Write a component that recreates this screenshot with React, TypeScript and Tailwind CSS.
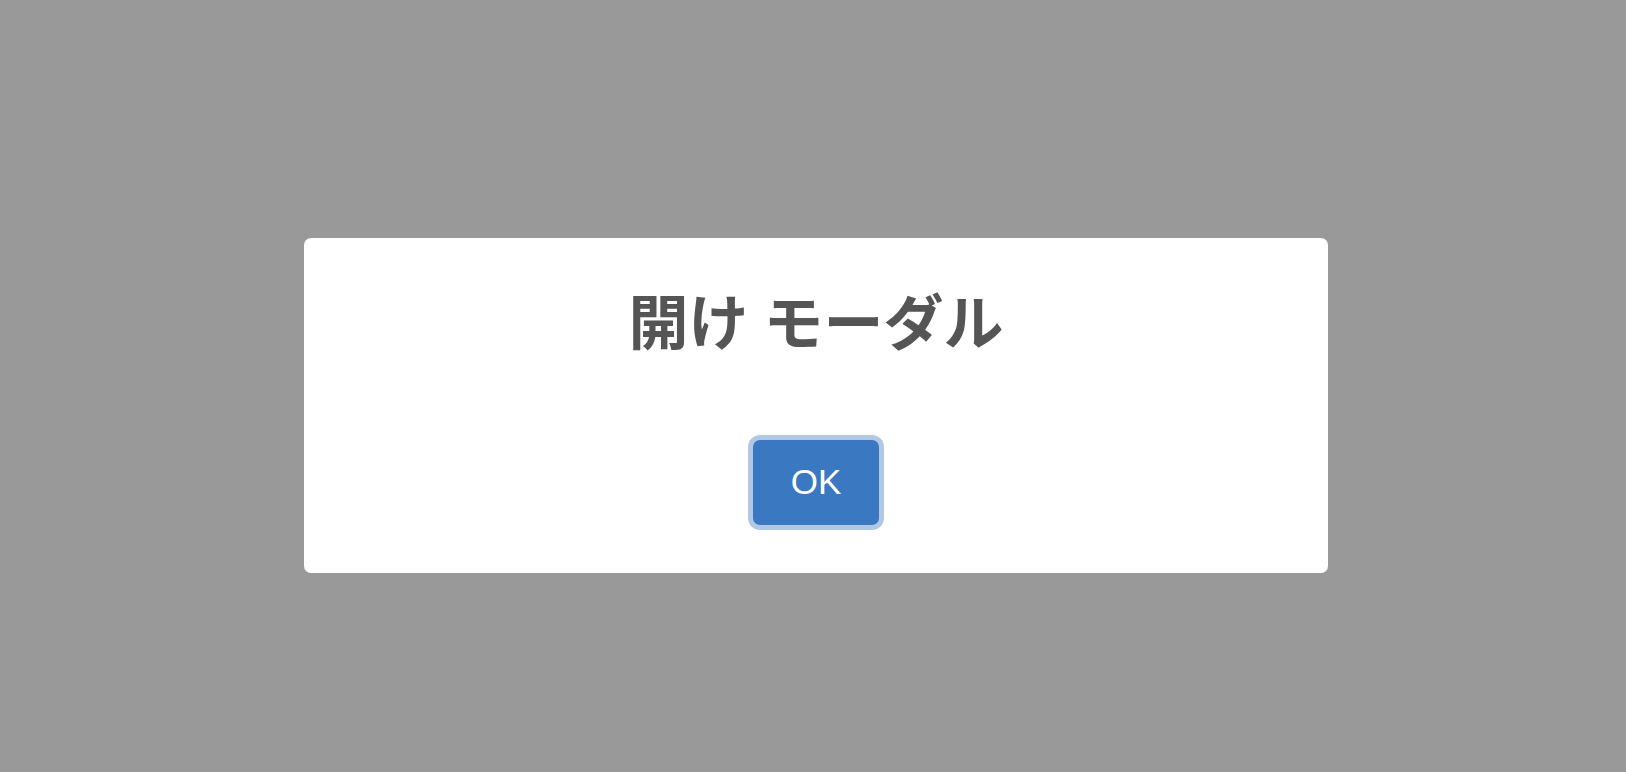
export default function App() {
  return (
    <div className="h-screen overflow-hidden w-full bg-[#999999] flex flex-col items-center pt-[238px] pl-[6px]">
      <div className="w-[1024px] h-[335px] bg-white rounded-[7px] flex flex-col items-center pt-[47px]">
        <h2
          className="text-[60px] leading-[80px] font-bold text-[#555555]"
          style={{ fontFamily: '"Liberation Serif", "Noto Sans CJK JP", serif' }}
        >
          開け モーダル
        </h2>
        <button
          className="mt-[75px] w-[126px] h-[85px] rounded-[7px] bg-[#3b78c2] text-white text-[35px] ring-[5px] ring-[#b2c7e3]"
          style={{ fontFamily: '"Liberation Sans", Arial, sans-serif' }}
        >
          OK
        </button>
      </div>
    </div>
  );
}
